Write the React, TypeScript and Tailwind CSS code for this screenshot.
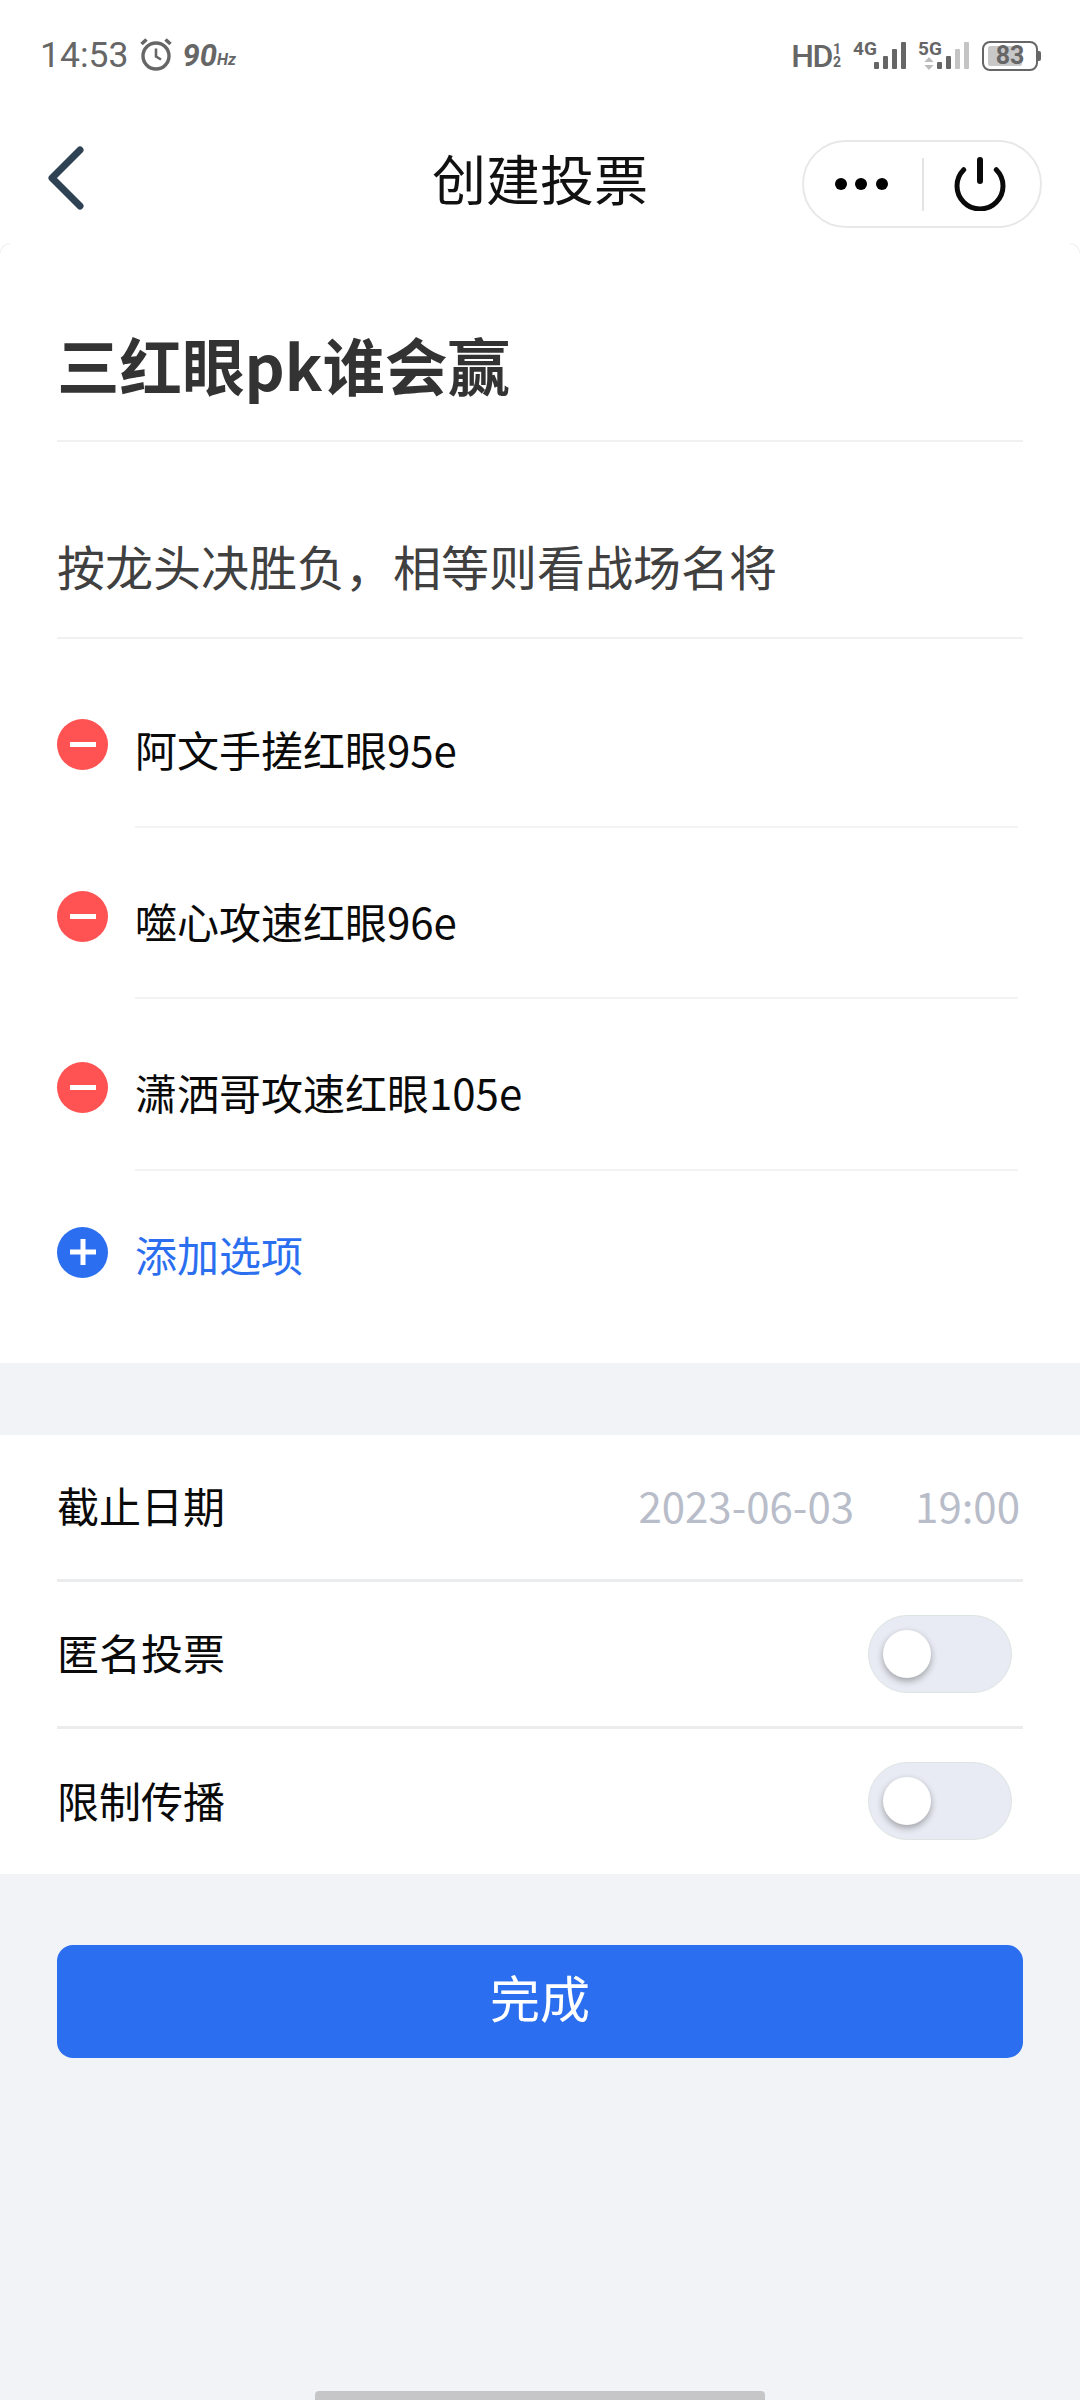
const cjk = "font-['Noto_Sans_CJK_SC','Noto_Sans',sans-serif]";

function SignalBars({ dim }: { dim: number }) {
  const bars = [
    { x: 0, y: 20, h: 7 },
    { x: 9, y: 14, h: 13 },
    { x: 18, y: 7, h: 20 },
    { x: 27, y: 0, h: 27 },
  ];
  return (
    <svg width="32" height="27" viewBox="0 0 32 27">
      {bars.map((b, i) => (
        <rect key={i} x={b.x} y={b.y} width="5" height={b.h} rx="1" fill={i >= 4 - dim ? '#c4c4c4' : '#666'} />
      ))}
    </svg>
  );
}

function StatusBar() {
  return (
    <div className="flex h-[110px] items-center justify-between pl-[40px] pr-[39px] pt-[1px] text-[#666] font-['Roboto',sans-serif]">
      <div className="flex items-center">
        <span className="text-[35.500px] leading-none">14:53</span>
        <svg className="mb-[3px] ml-[11px]" width="34" height="34" viewBox="0 0 34 34" fill="none" stroke="#666">
          <circle cx="17" cy="19" r="13" strokeWidth="3.4" />
          <path d="M17 11.500V19.500L22 22.500" strokeWidth="2.6" />
          <path d="M2.500 7L7.500 2.500M31.500 7L26.500 2.500" strokeWidth="3.6" />
        </svg>
        <span className="ml-[9px] text-[31px] font-bold italic leading-none">90</span>
        <span className="mt-[8px] text-[16px] font-bold italic leading-none">Hz</span>
      </div>
      <div className="flex items-center">
        <span className="text-[32px] font-medium leading-none tracking-[-1.5px]">HD</span>
        <span className="ml-[1px] flex flex-col items-center text-[14px] font-bold leading-[13px]">
          <span>1</span>
          <span>2</span>
        </span>
        <div className="relative ml-[12px] h-[27px] w-[53px]">
          <span className="absolute left-0 top-[-3px] text-[19px] font-bold leading-none">4G</span>
          <div className="absolute right-0 top-0">
            <SignalBars dim={0} />
          </div>
        </div>
        <div className="relative ml-[12px] h-[27px] w-[51px]">
          <span className="absolute left-0 top-[-3px] text-[19px] font-bold leading-none">5G</span>
          <svg className="absolute left-[5px] top-[15px]" width="12" height="13" viewBox="0 0 12 14" fill="#bbb">
            <path d="M6 0L11 5.500H1ZM6 14L1 8.500H11Z" />
          </svg>
          <div className="absolute right-0 top-0">
            <SignalBars dim={2} />
          </div>
        </div>
        <div className="relative ml-[13px] flex h-[30px] w-[56px] items-center justify-center rounded-[8px] border-[2.500px] border-[#666]">
          <div className="absolute bottom-[3px] left-[4px] top-[3px] w-[34px] rounded-[2px] bg-[#c8c8c8]" />
          <span className="relative text-[25px] font-bold leading-none">83</span>
        </div>
        <div className="h-[10px] w-[3px] rounded-r-[2px] bg-[#666]" />
      </div>
    </div>
  );
}

function NavBar() {
  return (
    <div className="grid h-[135px] grid-cols-3 items-center">
      <div className="pl-[48px]">
        <svg width="36" height="64" viewBox="0 0 36 64" fill="none" stroke="#2f4254" strokeWidth="7" strokeLinecap="round" strokeLinejoin="round">
          <path d="M32 4L4 32L32 60" />
        </svg>
      </div>
      <div className={`text-center text-[54px] leading-none text-[#111] ${cjk}`}>创建投票</div>
      <div className="flex justify-end pr-[38px] pt-[13px]">
        <div className="flex h-[88px] w-[240px] items-center rounded-full border-[2px] border-[#e8e8e8]">
          <div className="flex w-[118px] items-center justify-center gap-[8.500px] pr-[4px]">
            <span className="h-[12px] w-[12px] rounded-full bg-black" />
            <span className="h-[12px] w-[12px] rounded-full bg-black" />
            <span className="h-[12px] w-[12px] rounded-full bg-black" />
          </div>
          <div className="h-[53px] w-[2px] bg-[#e4e4e4]" />
          <div className="flex flex-1 items-center justify-center pr-[4px]">
            <svg width="54" height="54" viewBox="0 0 54 54" fill="none" stroke="#0a0a0a" strokeLinecap="round">
              <path d="M10.700 12.700A23 23 0 1 0 43.300 12.700" strokeWidth="5" />
              <path d="M27 3V24" strokeWidth="6" />
            </svg>
          </div>
        </div>
      </div>
    </div>
  );
}

function OptionRow({ label }: { label: string }) {
  return (
    <div className="flex h-[171.500px] items-center pl-[57px] pr-[62px]">
      <div className="mt-[6px] flex h-[51px] w-[51px] shrink-0 items-center justify-center rounded-full bg-[#ff5252]">
        <span className="h-[5px] w-[26px] bg-white" />
      </div>
      <div className="ml-[27px] flex h-full flex-1 items-center border-b-[2px] border-[#f2f3f5] pt-[17px] text-[42px] leading-none text-[#0a0a0a]">
        {label}
      </div>
    </div>
  );
}

function Toggle() {
  return (
    <div className="mr-[11px] flex h-[78px] w-[144px] items-center rounded-full border border-[#dde5e3] bg-[#e8ebf3] pl-[14px]">
      <span className="h-[48px] w-[48px] rounded-full bg-white shadow-[0_3px_7px_rgba(0,0,0,0.32)]" />
    </div>
  );
}

function SettingRow({ label, last, children }: { label: string; last?: boolean; children: React.ReactNode }) {
  return (
    <div className={`flex items-center justify-between ${last ? 'h-[145px]' : 'h-[147px] border-b-[3px] border-[#ebecee]'}`}>
      <span className="pb-[3px] text-[42px] leading-none text-[#0a0a0a]">{label}</span>
      {children}
    </div>
  );
}

export default function App() {
  return (
    <div className={`relative min-h-[2400px] overflow-hidden bg-[#f1f3f7] ${cjk}`}>
      <div className="bg-white">
        <StatusBar />
        <NavBar />
      </div>

      <div className="bg-white">
        <div className="mx-[57px] flex h-[197px] items-center border-b-[2px] border-[#f0f1f3] pt-[44px] text-[62.500px] font-bold leading-none text-[#333]">
          三红眼pk谁会赢
        </div>
        <div className="mx-[57px] flex h-[197px] items-center border-b-[2px] border-[#f0f1f3] pt-[50px] text-[48px] leading-none text-[#404040]">
          按龙头决胜负，相等则看战场名将
        </div>
        <div className="pt-[17px]">
          <OptionRow label="阿文手搓红眼95e" />
          <OptionRow label="噬心攻速红眼96e" />
          <OptionRow label="潇洒哥攻速红眼105e" />
        </div>
        <div className="flex h-[192px] items-start pl-[57px] pt-[56px]">
          <div className="flex h-[51px] w-[51px] items-center justify-center rounded-full bg-[#2b6ff0]">
            <svg width="28" height="28" viewBox="0 0 28 28" fill="white">
              <path d="M11.500 1H16.500V11.500H27V16.500H16.500V27H11.500V16.500H1V11.500H11.500Z" />
            </svg>
          </div>
          <span className="ml-[27px] pt-[1px] text-[42px] leading-[51px] text-[#2b6ff0]">添加选项</span>
        </div>
      </div>

      <div className="mt-[72px] bg-white px-[57px]">
        <SettingRow label="截止日期">
          <div className="mr-[3px] flex gap-[61px] pb-[3px] text-[42px] leading-none text-[#b8bdc9]">
            <span>2023-06-03</span>
            <span>19:00</span>
          </div>
        </SettingRow>
        <SettingRow label="匿名投票">
          <Toggle />
        </SettingRow>
        <SettingRow label="限制传播" last>
          <Toggle />
        </SettingRow>
      </div>

      <button className="mx-[57px] mt-[71px] flex h-[113px] w-[966px] items-center justify-center rounded-[16px] bg-[#2b6ff0] pb-[10px] text-[50px] leading-none text-white">
        完成
      </button>

      {/* faint corners where the page card meets the nav bar */}
      <span className="absolute left-0 top-[243px] h-[10px] w-[10px] rounded-tl-[10px] border-l border-t border-[#f0f0f0]" />
      <span className="absolute right-0 top-[243px] h-[10px] w-[10px] rounded-tr-[10px] border-r border-t border-[#f0f0f0]" />

      <div className="absolute bottom-0 left-[315px] h-[9px] w-[450px] rounded-t-[4px] bg-[#c6c6c8]" />
    </div>
  );
}
